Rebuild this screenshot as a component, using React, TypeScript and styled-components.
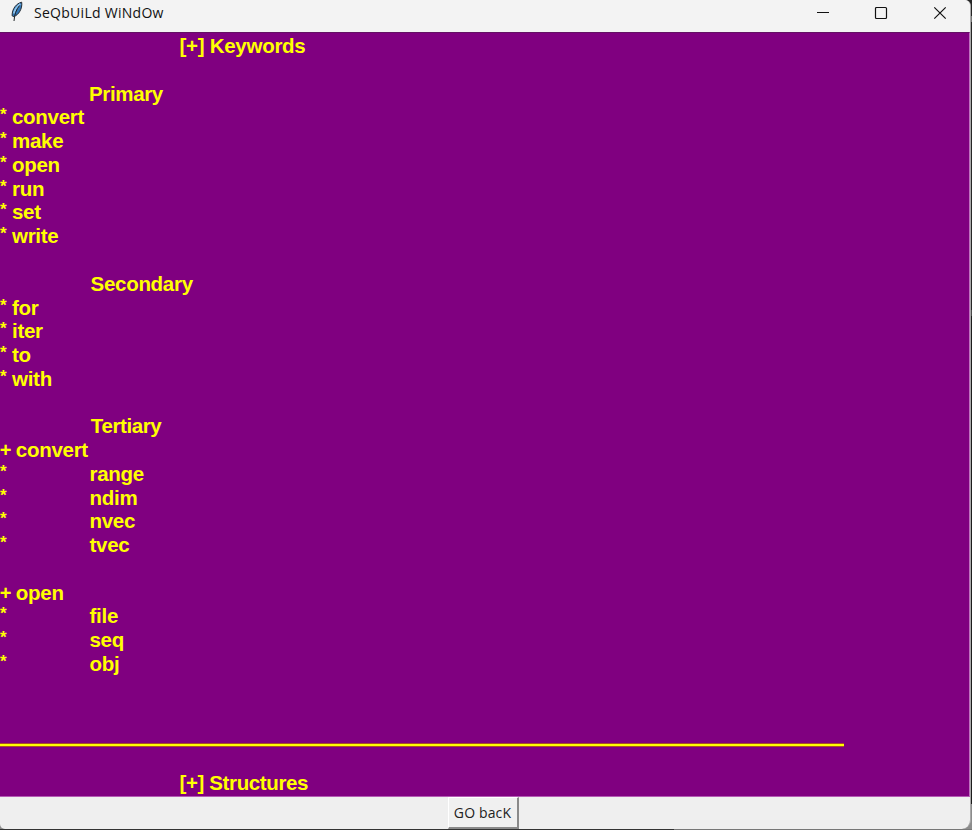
import React from 'react';
import styled, { createGlobalStyle } from 'styled-components';

const GlobalStyle = createGlobalStyle`
  * { box-sizing: border-box; }
  body { margin: 0; overflow: hidden; background: #202020; }
`;

const Desktop = styled.div`
  width: 972px;
  height: 830px;
  overflow: hidden;
  background: linear-gradient(90deg, #333 0 674px, #777 674px 100%) 0 829px / 972px 1px no-repeat,
    linear-gradient(#262626 0 16px, #777 16px 22px, #262626 22px 310px, #4a4a4a 310px 316px, #1c1c1c 316px 804px, #8c8c8c 804px);
`;

const Window = styled.div`
  display: flex;
  flex-direction: column;
  width: 971px;
  height: 829px;
  border-right: 1px solid #a8a8a8;
  border-radius: 0 6px 9px 5px;
  overflow: hidden;
  background: #efefef;
`;

const TitleBar = styled.header`
  display: flex;
  flex: 0 0 32px;
  height: 32px;
  padding-left: 9px;
  background: #f3f3f3;
`;

const Title = styled.h1`
  flex: 1;
  margin: 0 0 0 9px;
  font: 400 14px/26px 'Open Sans', 'Noto Sans', sans-serif;
  letter-spacing: 0.28px;
  color: #111;
`;

const Feather = styled.svg`
  width: 16px;
  height: 22px;
`;

const WindowButton = styled.button`
  width: 58.5px;
  height: 26px;
  padding: 0;
  border: 0;
  background: none;
  svg { display: block; margin: 0 auto; }
`;

const Controls = styled.div`
  display: flex;
  margin-right: 1px;
`;

const Editor = styled.main`
  flex: 0 0 765px;
  height: 765px;
  overflow: hidden;
  padding-top: 1.1px;
  border-top: 1px solid #641064;
  border-right: 1px solid #c070c0;
  border-bottom: 1px solid #b45ab4;
  background: #800080;
  color: #ffff00;
  font: 700 20.5px/23.77px 'Liberation Sans', Arial, sans-serif;
`;

const Line = styled.div`
  display: flex;
  height: 23.77px;
  white-space: pre;
`;

const Marker = styled.span<{ $width: number; $star: boolean }>`
  flex: 0 0 ${(p) => p.$width}px;
  text-indent: ${(p) => (p.$star ? 0 : -0.3)}px;
  font-size: ${(p) => (p.$star ? 17 : 20)}px;
  line-height: ${(p) => (p.$star ? 20 : 25.2)}px;
`;

const Word = styled.span<{ $spacing: number }>`
  letter-spacing: ${(p) => p.$spacing}px;
`;

const Rule = styled.div`
  width: 844px;
  height: 4px;
  margin-top: 20px;
  border: solid #a8502a;
  border-width: 1px 0;
  background: #ffff00;
`;

const Footer = styled.footer`
  display: flex;
  flex: 1;
  padding-left: 448px;
`;

const BackButton = styled.button`
  width: 71px;
  height: 32px;
  padding: 1px 1px 0 0;
  border: solid;
  border-width: 1px 2px 2px 1px;
  border-color: #fff #8a8a8a #8a8a8a #fff;
  background: #f0f0f0;
  color: #222;
  font: 400 14px/28px 'Open Sans', 'Noto Sans', sans-serif;
  letter-spacing: 0.15px;
  white-space: nowrap;
`;

type Entry = { mark?: string; at?: number; text?: string; rule?: boolean; spacing?: number };

const blank: Entry = {};
const item = (text: string): Entry => ({ mark: '*', at: 12, text });
const group = (text: string): Entry => ({ mark: '+', at: 15.8, text });
const option = (text: string): Entry => ({ mark: '*', at: 89.5, text });

const lines: Entry[] = [
  { at: 179.5, text: '[+] Keywords' },
  blank,
  { at: 89, text: 'Primary', spacing: -0.35 },
  ...['convert', 'make', 'open', 'run', 'set', 'write'].map(item),
  blank,
  { at: 90.5, text: 'Secondary' },
  ...['for', 'iter', 'to', 'with'].map(item),
  blank,
  { at: 90.8, text: 'Tertiary', spacing: -0.4 },
  group('convert'),
  ...['range', 'ndim', 'nvec', 'tvec'].map(option),
  blank,
  group('open'),
  ...['file', 'seq', 'obj'].map(option),
  blank,
  blank,
  { rule: true },
  blank,
  { at: 179.5, text: '[+] Structures', spacing: -0.38 },
];

export default function App() {
  return (
    <>
      <GlobalStyle />
      <Desktop>
        <Window>
          <TitleBar>
            <Feather viewBox="0 0 16 22">
              <path d="M12.7 2.2C7.5 3.4 3 8.5 3.1 15.8l1.8.8C9.4 15 13.6 9 12.7 2.2Z" fill="#3478b8" stroke="#252c33" strokeWidth="1" />
              <path d="M11.3 4C8 6.5 5.7 9.5 4.8 13.5" fill="none" stroke="#8fc5ed" strokeWidth="1.8" />
              <path d="M10.5 5.5C7.2 9.5 5.5 14.5 5 21" fill="none" stroke="#1f2428" strokeWidth="1" />
            </Feather>
            <Title>SeQbUiLd WiNdOw</Title>
            <Controls>
              <WindowButton aria-label="Minimize">
                <svg width="14" height="14"><path d="M1 6.5h12" stroke="#111" /></svg>
              </WindowButton>
              <WindowButton aria-label="Maximize">
                <svg width="14" height="14"><rect x="1.5" y="1.5" width="11" height="11" rx="1" fill="none" stroke="#111" strokeWidth="1.2" /></svg>
              </WindowButton>
              <WindowButton aria-label="Close">
                <svg width="14" height="14"><path d="M1.3 1.3l11.4 11.4M12.7 1.3L1.3 12.7" stroke="#111" strokeWidth="1.2" /></svg>
              </WindowButton>
            </Controls>
          </TitleBar>
          <Editor>
            {lines.map((line, i) => (
              <Line key={i}>
                {line.rule ? <Rule /> : (
                  <>
                    <Marker $width={line.at ?? 0} $star={line.mark === '*'}>{line.mark}</Marker>
                    <Word $spacing={line.spacing ?? -0.28}>{line.text}</Word>
                  </>
                )}
              </Line>
            ))}
          </Editor>
          <Footer>
            <BackButton>GO bacK</BackButton>
          </Footer>
        </Window>
      </Desktop>
    </>
  );
}
